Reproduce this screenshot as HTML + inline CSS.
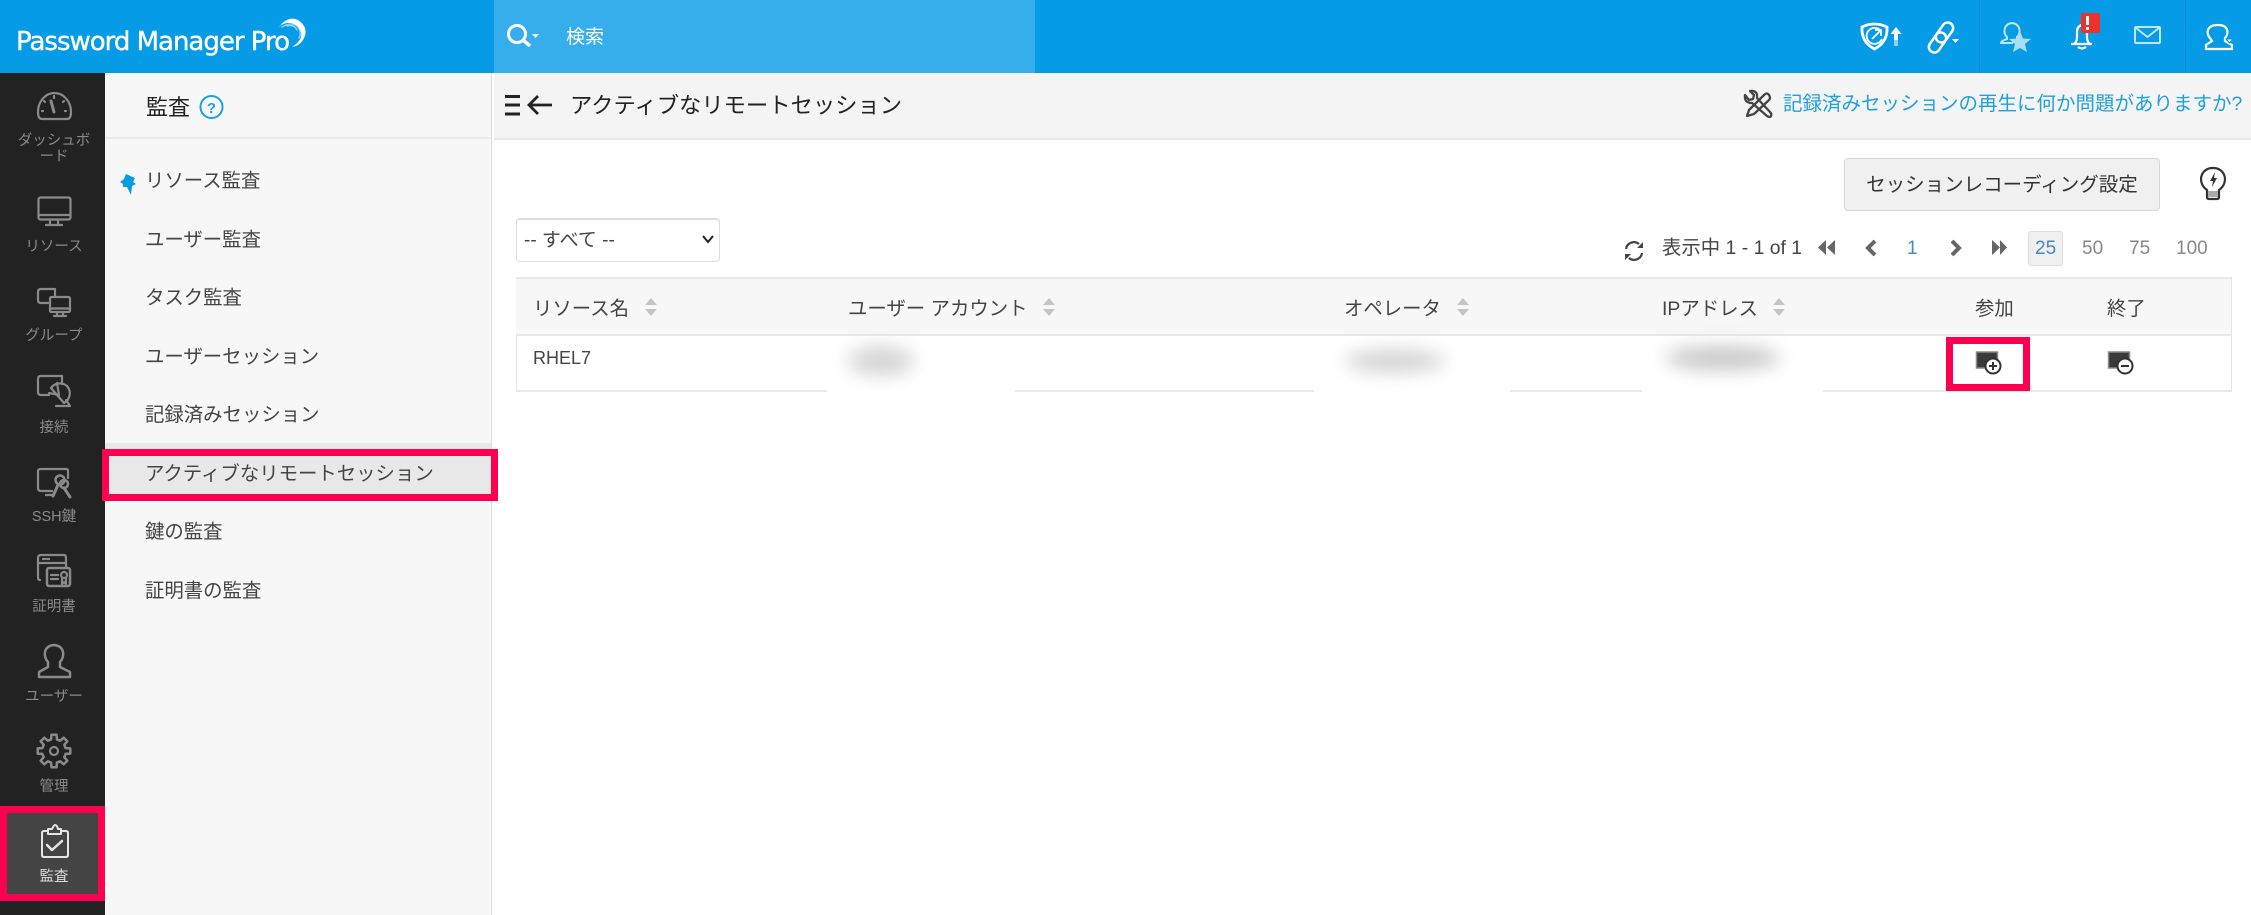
<!DOCTYPE html>
<html lang="ja"><head><meta charset="utf-8"><title>アクティブなリモートセッション</title>
<style>
html,body{margin:0;padding:0;width:2251px;height:915px;overflow:hidden;background:#fff}
body{position:relative;font-family:"Liberation Sans","Noto Sans CJK JP",sans-serif;color:#444}
.a{position:absolute}
.t{position:absolute;line-height:30px;height:30px;white-space:nowrap;font-size:19.400px}
.r{position:absolute;left:0;width:108px;text-align:center;font-size:14.500px;line-height:16px;color:#8a8a8a}
.s{color:#444}
svg{position:absolute;left:0;top:0}
.blur{position:absolute;border-radius:50%;filter:blur(9px)}
</style></head><body>
<div class="a" style="left:0;top:0;width:2251px;height:73px;background:#059be6"></div>
<div class="a" style="left:494px;top:0;width:541px;height:73px;background:#36aeec"></div>
<div class="a" style="left:1979px;top:0;width:1px;height:73px;background:#0a8ad0"></div>
<div class="a" style="left:2185px;top:0;width:1px;height:73px;background:#0a8ad0"></div>

<div class="a" style="left:0;top:73px;width:105px;height:842px;background:#222"></div>
<div class="a" style="left:105px;top:73px;width:386px;height:842px;background:#f7f7f7;border-right:1px solid #ddd"></div>
<div class="a" style="left:105px;top:137px;width:386px;height:2px;background:#ebebeb"></div>
<div class="a" style="left:105px;top:443px;width:386px;height:51px;background:#e8e8e8"></div>
<div class="a" style="left:102px;top:449px;width:382px;height:38px;border:7px solid #ff0050"></div>

<div class="a" style="left:494px;top:73px;width:1757px;height:65px;background:#f4f4f4;border-bottom:2px solid #e8e8e8"></div>

<div class="a" style="left:0;top:806px;width:91px;height:81px;background:#444;border:7px solid #ff0050"></div>

<svg width="2251" height="915" viewBox="0 0 2251 915" fill="none">
<text x="16" y="50" font-family="DejaVu Sans" font-size="26" fill="#fff" stroke="#fff" stroke-width=".4" textLength="274" lengthAdjust="spacing">Password Manager Pro</text>
<path d="M278 28Q288 15 298 20Q310 28 303 40Q299 46 292 47Q303 40 301 32Q297 22 287 23Q281 24 278 28Z" fill="#fff"/>
<g stroke="#fff" fill="none" stroke-linecap="round" opacity=".55">
<path d="M282 27Q292 21 298 27Q302 33 299 38" stroke-width="1.500"/>
<path d="M287 26Q294 24 297 30" stroke-width="1.500"/>
</g>

<!-- header left icons -->
<circle cx="517" cy="34" r="8.500" stroke="#fff" stroke-width="3"/>
<path d="M523 40L530 46" stroke="#fff" stroke-width="3.500"/>
<path d="M532 34h7l-3.500 4z" fill="#fff" opacity=".9"/>

<!-- header right icons -->
<g stroke="#fff" stroke-width="2.800" fill="none">
<path d="M1862 27Q1874 21 1887 27Q1888 42 1874.500 49Q1861 42 1862 27Z"/>
<path d="M1881 31a8 8 0 1 0 1 8" stroke-width="1.800"/>
<path d="M1872 39L1881 30M1875 30h6v6" stroke-width="1.800"/>
<rect x="-5.500" y="-11" width="11" height="22" rx="5.500" transform="translate(1944.500 32.500) rotate(35)" stroke-width="2.500"/>
<rect x="-5.500" y="-11" width="11" height="22" rx="5.500" transform="translate(1937.500 42.500) rotate(35)" stroke-width="2.500"/>
</g>
<path d="M1896 27l5.500 7h-3.500v6h-4v-6h-3.500z" fill="#fff"/>
<rect x="1894" y="40" width="4" height="6" fill="#fff" opacity=".55"/>
<path d="M1952 39h7l-3.500 4z" fill="#fff"/>
<g stroke="#bfe6fb" stroke-width="2" fill="none">
<path d="M2007 37C2003 34 2003 24 2012 23C2021 24 2021 34 2017 37L2017 39L2012 43H2001Q2001 41 2007 39Z"/>
<rect x="2135" y="27" width="25" height="16" rx="1"/>
<path d="M2136 28L2147.500 37L2159 28"/>
</g>
<path d="M2020 31l3 7.500 8 .5-6 5 2 8-7-4-7 4 2-8-6-5 8-.5z" fill="#a8defa"/>
<g stroke="#fff" stroke-width="2.200" fill="none">
<path d="M2071 44h21M2074 44q3-2 3-7v-5q0-6 5-7q5 1 5 7v5q0 5 3 7"/>
<path d="M2078 47q4 3 8 0"/>
<path d="M2210 38C2206 34 2206 25 2218 25C2229 25 2229 34 2225 38V41L2232 45V49H2206V45L2212 41Z"/>
</g>
<rect x="2081" y="13" width="19" height="20" rx="2" fill="#f0302a"/>
<rect x="2086" y="16" width="3" height="9" fill="#fff"/><rect x="2086" y="27" width="3" height="3" fill="#fff"/>
<path d="M2226 39h7l-3.500 4z" fill="#fff" stroke="#059be6" stroke-width="1"/>

<!-- rail -->
<g stroke="#8a8a8a" stroke-width="2.200" fill="none" stroke-linecap="round" stroke-linejoin="round">
<path d="M42 119H67Q71 119 71 112A16.500 19 0 0 0 38 112Q38 119 42 119Z"/>
<path d="M51 101L54 112" stroke-width="3"/><path d="M54 96v2M44 101l1 1M64 101l-1 1M42 111h1M66 111h-1"/>
<rect x="38.500" y="197.500" width="32" height="22" rx="2"/><path d="M39 215H70M50 220v4M58 220v4M46 225H62"/>
<path d="M55 296V289H41Q38 289 38 292V300Q38 303 41 303H48"/>
<rect x="50" y="297" width="20" height="15" rx="1.500"/><path d="M51 308.500H69M57 313v2M63 313v2M54 316H66"/>
<path d="M62 384V376H41Q38 376 38 379V392Q38 395 41 395H49"/>
<path d="M51 388L64 403A11 11 0 0 0 67 386A11 11 0 0 0 51 388Z"/><path d="M49 393L59 395L57 383"/><path d="M56 406H70L66 400"/>
<path d="M68 478V471Q68 469 66 469H41Q38 469 38 471V488Q38 491 41 491H52M46 495H52"/>
<circle cx="60" cy="480" r="4.500" stroke-width="2.500"/><circle cx="64" cy="484" r="4" stroke-width="2.500"/><path d="M58 485L53 496M64 488L70 497" stroke-width="3"/>
<path d="M40 580Q38 580 38 577V558Q38 555 41 555H64Q66 555 66 558V567"/><path d="M39 563H65M43 559h2M47 559h2"/>
<rect x="47" y="568" width="23" height="18" rx="2" stroke-width="2.500"/>
<path d="M51 575h7M51 579h7"/><circle cx="64" cy="575" r="3"/><path d="M62 579v5l2-2 2 2v-5"/>
<path d="M48 662C43 657 43 646 54 645C65 646 65 657 60 662V667L70 672V677H39V672L48 667Z" stroke-width="2.500"/>
<polygon transform="translate(54 751)" points="-2.900,-11.600 -2.600,-16.300 2.600,-16.300 2.900,-11.600 6.200,-10.300 9.700,-13.300 13.300,-9.700 10.300,-6.200 11.600,-2.900 16.300,-2.600 16.300,2.600 11.600,2.900 10.300,6.200 13.300,9.700 9.700,13.300 6.200,10.300 2.900,11.600 2.600,16.300 -2.600,16.300 -2.900,11.600 -6.200,10.300 -9.700,13.300 -13.300,9.700 -10.300,6.200 -11.600,2.900 -16.300,2.600 -16.300,-2.600 -11.600,-2.900 -10.300,-6.200 -13.300,-9.700 -9.700,-13.300 -6.200,-10.300" stroke-width="2.500"/>
<circle cx="54" cy="751" r="4"/>
</g>
<g stroke="#e6e6e6" stroke-width="2" fill="none" stroke-linejoin="round" stroke-linecap="round">
<path d="M48 831H44Q42 831 42 833V855Q42 857 44 857H66Q68 857 68 855V833Q68 831 66 831H61"/>
<path d="M48 834V829H52Q54 825 55 825Q57 825 58 829H61V834Z"/>
<path d="M47 845L52 850L62 841" stroke-width="2.500"/>
</g>

<!-- pin & help -->
<path d="M126 174l9 4-2 4 3 2-4 2-1 9-4-8-4 0 0-3-3-2 4-3z" fill="#059be6"/>
<circle cx="211.500" cy="107" r="11" stroke="#1ea0e0" stroke-width="2"/>
<text x="211.500" y="113" text-anchor="middle" font-family="Liberation Sans" font-weight="700" font-size="15" fill="#1ea0e0">?</text>

<!-- main head icons -->
<path d="M505 96.500H520M505 105H520M505 114H520" stroke="#222" stroke-width="3"/>
<path d="M552 105H530M538 96L529 105L538 114" stroke="#222" stroke-width="2.800"/>
<g stroke="#444" stroke-width="2.300" fill="none" stroke-linejoin="round">
<path d="M1745 95q-1 8 7 8l15 13q3 2 4 0t-1-4L1757 98q1-8-7-7l4 4-1 4-4 1z"/>
<path d="M1747 116l2-6 15-15q3-3 5 0t0 5L1754 114z"/>
</g>

<!-- bulb -->
<g stroke="#333" stroke-width="2.200" fill="none">
<path d="M2207 190C2197 183 2200 168 2213 168C2226 168 2229 183 2219 190V197Q2219 199 2217 199H2209Q2207 199 2207 197Z"/>
</g>
<rect x="2208" y="191" width="10" height="6" fill="#aaa"/>
<path d="M2215 172l-5 9h3l-1 6 5-9h-3z" fill="#333"/>

<!-- pagination icons -->
<g stroke="#444" stroke-width="2.200" fill="none">
<path d="M1626 249a8 8 0 0 1 13-5M1642 253a8 8 0 0 1-13 5"/>
</g>
<path d="M1637 248h6v-6zM1631 254h-6v6z" fill="#444"/>
<path d="M1826 240v15l-8-7.500zM1835 240v15l-8-7.500z" fill="#666"/>
<path d="M1875 241l-7 7 7 7" stroke="#666" stroke-width="4" fill="none"/>
<path d="M1952 241l7 7-7 7" stroke="#666" stroke-width="4" fill="none"/>
<path d="M1992 240v15l8-7.500zM2000 240v15l7-7.500z" fill="#666"/>

<!-- table -->
<path d="M516.500 277V391" stroke="#e6e6e6"/>
</svg>

<div class="t" style="left:566px;top:23px;color:#fff;font-size:19px">検索</div>

<div class="t" style="left:146px;top:93px;font-size:22px;color:#222">監査</div>
<div class="t s" style="left:145px;top:166px">リソース監査</div>
<div class="t s" style="left:145px;top:225px">ユーザー監査</div>
<div class="t s" style="left:145px;top:283px">タスク監査</div>
<div class="t s" style="left:145px;top:342px">ユーザーセッション</div>
<div class="t s" style="left:145px;top:400px">記録済みセッション</div>
<div class="t s" style="left:145px;top:459px">アクティブなリモートセッション</div>
<div class="t s" style="left:145px;top:517px">鍵の監査</div>
<div class="t s" style="left:145px;top:576px">証明書の監査</div>

<div class="r" style="top:133px;left:15px;width:78px">ダッシュボード</div>
<div class="r" style="top:239px">リソース</div>
<div class="r" style="top:328px">グループ</div>
<div class="r" style="top:420px">接続</div>
<div class="r" style="top:509px">SSH鍵</div>
<div class="r" style="top:599px">証明書</div>
<div class="r" style="top:689px">ユーザー</div>
<div class="r" style="top:779px">管理</div>
<div class="r" style="top:869px;color:#ddd">監査</div>

<div class="t" style="left:570px;top:91px;font-size:22.300px;color:#222">アクティブなリモートセッション</div>
<div class="t" style="left:1783px;top:89px;font-size:19.500px;color:#1ea0e0">記録済みセッションの再生に何か問題がありますか?</div>

<div class="a" style="left:1844px;top:158px;width:314px;height:51px;background:#f0f0f0;border:1px solid #d6d6d6;border-radius:4px;text-align:center;line-height:52px;font-size:19.500px;color:#333">セッションレコーディング設定</div>

<div class="a" style="left:516px;top:218px;width:202px;height:41px;border:1px solid #ddd;border-top:2px solid #ddd;border-radius:4px;background:#fff"></div>
<div class="t" style="left:524px;top:226px;font-size:19px">-- すべて --</div>
<svg class="a" style="left:702px;top:234px" width="12" height="10" fill="none"><path d="M1 2L6 8L11 2" stroke="#222" stroke-width="2"/></svg>

<div class="t" style="left:1662px;top:233px;font-size:19.400px">表示中 1 - 1 of 1</div>
<div class="t" style="left:1907px;top:234px;font-size:19px;color:#4a88c0">1</div>
<div class="a" style="left:2028px;top:231px;width:33px;height:33px;background:#f0f0f0;border:1px solid #ddd;border-radius:3px"></div>
<div class="t" style="left:2035px;top:234px;font-size:19px;color:#4a88c0">25</div>
<div class="t" style="left:2082px;top:234px;font-size:19px;color:#888">50</div>
<div class="t" style="left:2129px;top:234px;font-size:19px;color:#888">75</div>
<div class="t" style="left:2176px;top:234px;font-size:19px;color:#888">100</div>

<div class="a" style="left:516px;top:277px;width:1715px;height:55px;background:#f7f7f7;border-top:2px solid #e8e8e8;border-bottom:2px solid #e8e8e8"></div>
<div class="a" style="left:2231px;top:277px;width:1px;height:114px;background:#e4e4e4"></div>
<div class="a" style="left:516px;top:390px;width:1716px;height:2px;background:#e8e8e8"></div>

<div class="t" style="left:533px;top:294px">リソース名</div>
<div class="t" style="left:848px;top:294px">ユーザー アカウント</div>
<div class="t" style="left:1344px;top:294px">オペレータ</div>
<div class="t" style="left:1662px;top:294px">IPアドレス</div>
<div class="t" style="left:1975px;top:294px">参加</div>
<div class="t" style="left:2107px;top:294px">終了</div>
<div class="t" style="left:533px;top:343px;font-size:18px">RHEL7</div>

<svg class="a" style="left:0;top:0" width="2251" height="915">
<g fill="#c4c4c4">
<path d="M645 305l6-7 6 7zM645 309l6 7 6-7zM1043 305l6-7 6 7zM1043 309l6 7 6-7zM1457 305l6-7 6 7zM1457 309l6 7 6-7zM1773 305l6-7 6 7zM1773 309l6 7 6-7z"/>
</g>
</svg>

<div class="a" style="left:827px;top:340px;width:188px;height:54px;background:#fff"></div>
<div class="a" style="left:1314px;top:338px;width:196px;height:56px;background:#fff"></div>
<div class="a" style="left:1642px;top:338px;width:181px;height:55px;background:#fff"></div>
<div class="blur" style="left:848px;top:346px;width:66px;height:30px;background:#d6d6d6"></div>
<div class="blur" style="left:1345px;top:350px;width:100px;height:22px;background:#d2d2d2"></div>
<div class="blur" style="left:1665px;top:346px;width:115px;height:24px;background:#c8c8c8"></div>

<div class="a" style="left:1946px;top:337px;width:70px;height:40px;border:7px solid #ff0050"></div>
<svg class="a" style="left:0;top:0" width="2251" height="915">
<rect x="1976.500" y="352" width="21" height="16" fill="#3a3a3a" stroke="#8a8a8a" stroke-width="1.500"/>
<circle cx="1993" cy="366" r="7.500" fill="#fff" stroke="#333" stroke-width="2"/>
<path d="M1989 366h8M1993 362v8" stroke="#333" stroke-width="2"/>
<rect x="2108.500" y="352" width="21" height="16" fill="#3a3a3a" stroke="#8a8a8a" stroke-width="1.500"/>
<circle cx="2125" cy="366" r="7.500" fill="#fff" stroke="#333" stroke-width="2"/>
<path d="M2121 366h8" stroke="#333" stroke-width="2"/>
</svg>
</body></html>
